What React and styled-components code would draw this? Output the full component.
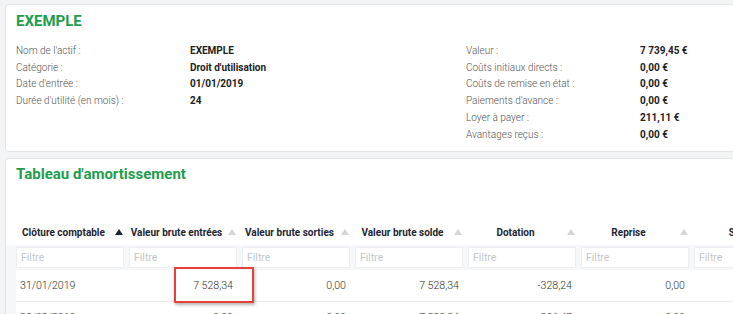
import React from 'react';
import styled, { createGlobalStyle } from 'styled-components';

const GlobalStyle = createGlobalStyle`
  html, body {
    margin: 0;
    padding: 0;
    background: #f3f4f6;
    overflow: hidden;
    font-family: Roboto, "Liberation Sans", Arial, sans-serif;
  }
`;

const infoLeft = [
  ['Nom de l\'actif :', 'EXEMPLE'],
  ['Catégorie :', 'Droit d\'utilisation'],
  ['Date d\'entrée :', '01/01/2019'],
  ['Durée d\'utilité (en mois) :', '24'],
];

const infoRight = [
  ['Valeur :', '7 739,45 €'],
  ['Coûts initiaux directs :', '0,00 €'],
  ['Coûts de remise en état :', '0,00 €'],
  ['Paiements d\'avance :', '0,00 €'],
  ['Loyer à payer :', '211,11 €'],
  ['Avantages reçus :', '0,00 €'],
];

const columns = [
  { label: 'Clôture comptable', active: true },
  { label: 'Valeur brute entrées' },
  { label: 'Valeur brute sorties' },
  { label: 'Valeur brute solde' },
  { label: 'Dotation' },
  { label: 'Reprise' },
  { label: 'Solde' },
];

const rows = [
  ['31/01/2019', '7 528,34', '0,00', '7 528,34', '-328,24', '0,00', ''],
  ['28/02/2019', '0,00', '0,00', '7 528,34', '-306,47', '0,00', ''],
];

function App() {
  return (
    <>
      <GlobalStyle />
      <Page>
        <Card>
          <Title>EXEMPLE</Title>
          <InfoGrid>
            <InfoBlock>
              {infoLeft.map(([k, v]) => (
                <React.Fragment key={k}>
                  <Label>{k}</Label>
                  <Value>{v}</Value>
                </React.Fragment>
              ))}
            </InfoBlock>
            <InfoBlock>
              {infoRight.map(([k, v]) => (
                <React.Fragment key={k}>
                  <Label>{k}</Label>
                  <Value>{v}</Value>
                </React.Fragment>
              ))}
            </InfoBlock>
          </InfoGrid>
        </Card>

        <Card $tight>
          <Title>Tableau d'amortissement</Title>
          <Table>
            <HeadRow>
              {columns.map(c => (
                <HeadCell key={c.label}>
                  <HeadLabel>{c.label}</HeadLabel>
                  <SortArrow $active={c.active} />
                </HeadCell>
              ))}
            </HeadRow>
            <Body>
              <FilterRow>
                {columns.map(c => (
                  <FilterInput key={c.label} placeholder="Filtre" readOnly />
                ))}
              </FilterRow>
              {rows.map((r, i) => (
                <DataRow key={r[0]}>
                  {r.map((cell, j) => (
                    <Cell key={j} $left={j === 0}>
                      {cell}
                      {i === 0 && j === 1 && <Highlight />}
                    </Cell>
                  ))}
                </DataRow>
              ))}
            </Body>
          </Table>
        </Card>
      </Page>
    </>
  );
}

export default App;

const Page = styled.div`
  display: flex;
  flex-direction: column;
  gap: 6px;
  padding: 4px 0 0 5px;
  width: 820px;
`;

const Card = styled.div`
  background: #fff;
  border: 1px solid #e1e4e8;
  border-radius: 4px;
  padding: ${p => (p.$tight ? '5px 0 0 0' : '6px 0 8px 0')};
`;

const Title = styled.h2`
  margin: 0;
  padding: 0 10px;
  font-size: 15px;
  line-height: 20px;
  font-weight: 700;
  color: #1f9d4c;
`;

const InfoGrid = styled.div`
  display: grid;
  grid-template-columns: 450px 1fr;
  padding: 12px 10px 0;
`;

const InfoBlock = styled.div`
  display: grid;
  grid-template-columns: 174px 1fr;
  align-content: start;
`;

const Label = styled.div`
  font-size: 10px;
  line-height: 16.7px;
  font-weight: 300;
  color: #555;
`;

const Value = styled.div`
  font-size: 10px;
  line-height: 16.7px;
  font-weight: 700;
  color: #222;
`;

const Table = styled.div`
  margin-top: 36px;
`;

const colGrid = `
  display: grid;
  grid-template-columns: repeat(7, 108px);
  column-gap: 5px;
  padding-left: 10px;
`;

const HeadRow = styled.div`
  ${colGrid}
  height: 25px;
  align-items: center;
`;

const HeadCell = styled.div`
  display: flex;
  align-items: center;
`;

const HeadLabel = styled.span`
  flex: 1;
  text-align: center;
  font-size: 10px;
  font-weight: 700;
  color: #1d2533;
  white-space: nowrap;
`;

const SortArrow = styled.span`
  width: 0;
  height: 0;
  margin: 0 1px 1px 4px;
  border-left: 4px solid transparent;
  border-right: 4px solid transparent;
  border-bottom: 6px solid ${p => (p.$active ? '#1d2533' : '#d3d6da')};
`;

const Body = styled.div`
  background: #f6f7f9;
  padding-top: 2px;
`;

const FilterRow = styled.div`
  ${colGrid}
  padding-bottom: 2px;
`;

const FilterInput = styled.input`
  box-sizing: border-box;
  height: 21px;
  width: 100%;
  border: 1px solid #eceef1;
  background: #fff;
  padding: 0 4px;
  font-family: inherit;
  font-size: 10.5px;
  outline: none;
  &::placeholder {
    color: #c4c7cc;
  }
`;

const DataRow = styled.div`
  ${colGrid}
  background: #fff;
  margin-left: 10px;
  padding-left: 0;
  height: 31px;
  border-bottom: 1px solid #e6e8eb;
`;

const Cell = styled.div`
  position: relative;
  display: flex;
  align-items: center;
  justify-content: ${p => (p.$left ? 'flex-start' : 'flex-end')};
  font-size: 10.6px;
  font-weight: 300;
  color: #333;
  padding: ${p => (p.$left ? '0 0 0 4px' : '0 4px 0 0')};
`;

const Highlight = styled.span`
  position: absolute;
  left: 45px;
  top: -3px;
  width: 80px;
  height: 36px;
  box-sizing: border-box;
  border: 2px solid #e8403b;
  box-shadow: 1px 2px 3px rgba(0, 0, 0, 0.3);
  pointer-events: none;
`;
